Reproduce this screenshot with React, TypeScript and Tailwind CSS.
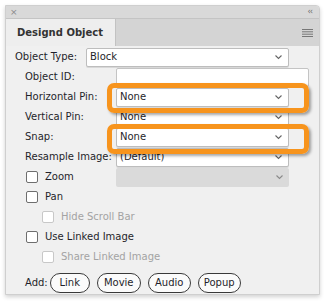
import React from 'react'

const font = { fontFamily: '"DejaVu Sans", "Liberation Sans", sans-serif' }

function Chevron({ muted }: { muted?: boolean }) {
  return (
    <svg width="9" height="6" viewBox="0 0 9 6" className="shrink-0">
      <path d="M1.5 1.5 L4.5 4.5 L7.5 1.5" fill="none" stroke={muted ? '#8a8a8a' : '#666'} strokeWidth="1.1" />
    </svg>
  )
}

function Select({ value, width, disabled }: { value: string; width: string; disabled?: boolean }) {
  return (
    <div
      className={`${width} h-[19px] flex items-center justify-between pl-[3px] pr-[5px] rounded-[2px] ${
        disabled ? 'bg-[#dadada]' : 'bg-white border border-[#bdbdbd] shadow-[0_1px_0_#d8d8d8]'
      }`}
    >
      <span className="text-[10px] text-[#1f1f2a] leading-none">{value}</span>
      <Chevron muted={disabled} />
    </div>
  )
}

function Row({ label, indent, children }: { label: string; indent?: boolean; children: React.ReactNode }) {
  return (
    <div className={`h-[20px] flex items-center ${indent ? 'pl-[19px]' : 'pl-[9px]'}`}>
      <span className={`text-[10px] text-[#1f1f2a] leading-none ${indent ? 'w-[91px]' : 'w-[71px]'}`}>{label}</span>
      {children}
    </div>
  )
}

function Check({ label, disabled, indent }: { label: string; disabled?: boolean; indent?: boolean }) {
  return (
    <div className={`h-[20px] flex items-center gap-[7px] ${indent ? 'pl-[36px]' : 'pl-[20px]'}`}>
      <div
        className={`w-[12px] h-[12px] rounded-[2px] border bg-white ${
          disabled ? 'border-[#c8c8c8]' : 'border-[#6e6e6e]'
        }`}
      />
      <span className={`text-[10px] leading-none ${disabled ? 'text-[#a3a3a3]' : 'text-[#1f1f2a]'}`}>{label}</span>
    </div>
  )
}

function Pill({ label, w }: { label: string; w: string }) {
  return (
    <div
      className={`${w} h-[20px] flex items-center justify-center rounded-full border border-[#3a3a3a] bg-[#fbfbfb] text-[10px] text-[#1f1f2a] leading-none`}
    >
      {label}
    </div>
  )
}

export default function App() {
  return (
    <div className="w-[330px] h-[308px] bg-white pt-[5px] pl-[5px]" style={font}>
      <div className="relative w-[315px] h-[290px] bg-[#f0f0f0] border border-[#cfcfcf] rounded-tr-[4px] shadow-[0_2px_4px_rgba(0,0,0,0.18)] overflow-hidden">
        <div className="h-[13px] bg-[#d9d9d9] border-b border-[#c4c4c4] flex items-center justify-between pl-[4px] pr-[7px]">
          <span className="text-[9px] text-[#8a8a8a] leading-none">×</span>
          <span className="text-[8px] text-[#6a6a6a] leading-none tracking-[-1px]">‹‹</span>
        </div>
        <div className="h-[27px] bg-[#d4d4d4] flex items-stretch">
          <div className="w-[110px] bg-[#eeeeee] border-r border-[#c2c2c2] flex items-center pl-[11px]">
            <span className="text-[10px] font-bold text-[#333] leading-none">Designd Object</span>
          </div>
          <div className="flex-1 flex items-center justify-end pr-[6px]">
            <svg width="11" height="8" viewBox="0 0 11 8">
              <path d="M0 0.5H11M0 2.8H11M0 5.2H11M0 7.5H11" stroke="#777" strokeWidth="1" />
            </svg>
          </div>
        </div>

        <div className="pt-[1px]">
          <Row label="Object Type:">
            <Select value="Block" width="w-[203px]" />
          </Row>
          <Row label="Object ID:" indent>
            <div className="w-[193px] h-[19px] bg-white border border-[#c4c4c4] rounded-[2px]" />
          </Row>
          <Row label="Horizontal Pin:" indent>
            <Select value="None" width="w-[173px]" />
          </Row>
          <Row label="Vertical Pin:" indent>
            <Select value="None" width="w-[173px]" />
          </Row>
          <Row label="Snap:" indent>
            <Select value="None" width="w-[173px]" />
          </Row>
          <Row label="Resample Image:" indent>
            <Select value="(Default)" width="w-[173px]" />
          </Row>
          <div className="h-[20px] flex items-center">
            <div className="w-[110px]">
              <Check label="Zoom" />
            </div>
            <Select value="" width="w-[173px]" disabled />
          </div>
          <Check label="Pan" />
          <Check label="Hide Scroll Bar" disabled indent />
          <Check label="Use Linked Image" />
          <Check label="Share Linked Image" disabled indent />
          <div className="mt-[6px] flex items-center pl-[19px] gap-[7px]">
            <span className="text-[10px] text-[#1f1f2a] leading-none -mr-[5px]">Add:</span>
            <Pill label="Link" w="w-[40px]" />
            <Pill label="Movie" w="w-[44px]" />
            <Pill label="Audio" w="w-[43px]" />
            <Pill label="Popup" w="w-[43px]" />
          </div>
        </div>

        <div className="absolute left-[101px] top-[77px] w-[202px] h-[30px] border-[5px] border-[#f7941d] rounded-[7px] shadow-[2px_2px_3px_rgba(0,0,0,0.35)]" />
        <div className="absolute left-[101px] top-[118px] w-[202px] h-[30px] border-[5px] border-[#f7941d] rounded-[7px] shadow-[2px_2px_3px_rgba(0,0,0,0.35)]" />
      </div>
    </div>
  )
}
